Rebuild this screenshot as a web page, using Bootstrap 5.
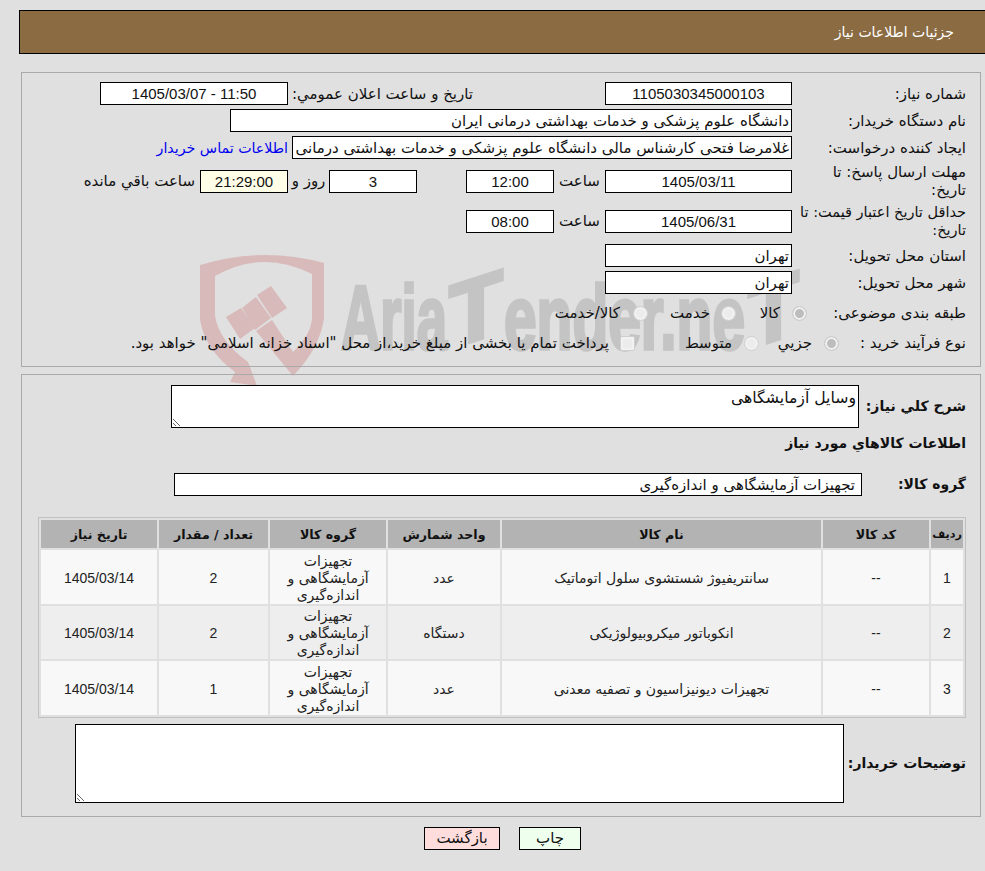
<!DOCTYPE html>
<html lang="fa" dir="rtl">
<head>
<meta charset="utf-8">
<title>جزئیات اطلاعات نیاز</title>
<link href="https://cdn.jsdelivr.net/npm/bootstrap@5.3.0/dist/css/bootstrap.min.css" rel="stylesheet">
<style>
html,body{height:871px;overflow:hidden}
body{background:#e0e0e0;font-family:"DejaVu Sans","Noto Sans",sans-serif;font-size:15px;line-height:18px;color:#111;position:relative}
.mark-wm{position:absolute;left:0;top:0;width:985px;height:871px;pointer-events:none}
.page-head{margin:10px 0 0 19px;height:44px;background:#8b6b42;border:1px solid #000;border-right:0;color:#fff;display:flex;align-items:center;padding-right:31px;font-size:14px}
.panel-box{position:relative;border:1px solid #a9a9a9;margin-left:21px;margin-right:4px}
.panel-a{margin-top:18px;height:295px;padding:9px 14px 0 0}
.panel-b{margin-top:7px;height:443px;padding:10px 14px 0 0}
.frow{display:flex;align-items:center;position:relative}
.flabel{width:174px;flex:none}
.flabel-tight{font-size:14.5px}
.fbox{display:block;height:23px;border:1px solid #000;background:#fff;border-radius:0;padding:0 2px;font:15px/21px "DejaVu Sans",sans-serif;color:#111;white-space:nowrap;overflow:hidden;flex:none;outline:0}
.centered{text-align:center;font-family:"Liberation Sans",sans-serif}
.w187{width:187px}.w88{width:88px}
.remain{background:#ffffe8}
.bluelink{color:#0000ee;text-decoration:none;font-size:14.2px}
.sp{flex:none}
.opt{display:flex;align-items:center;flex:none}
.circ{width:15px;height:15px;border-radius:50%;border:1px solid #cfcfcf;background:#ececec;box-shadow:inset 0 0 0 2px #f2f2f2;flex:none}
.circ.on{background:#bdbdbd}
.sq{width:15px;height:15px;border:1px solid #cfcfcf;border-radius:2px;background:#ececec;box-shadow:inset 0 0 0 2px #f2f2f2;flex:none}
.boldlabel{font-weight:700;font-size:14px;line-height:17px;flex:none}
.ta{display:block;border:1px solid #000;background:#fff;border-radius:0;resize:both;font:15.7px/18px "DejaVu Sans",sans-serif;padding:3px 2px;outline:0;color:#111}
.tbl-wrap{border:1px solid #c0c0c0;width:928px;position:relative}
.goods{table-layout:fixed;width:100%;border-collapse:separate;border-spacing:2px;margin:0;font-size:14px;line-height:17px}
.goods th{background:#b3b3b3;height:28px;text-align:center;vertical-align:middle;font-weight:700;font-size:12.6px;padding:1px 0 0;color:#111}
.goods th.narrow-head{font-size:11.2px}
.goods td{text-align:center;vertical-align:middle;padding:2.6px 0 0;height:53.67px;color:#222}
.goods tr.odd td{background:#f8f8f8}
.goods tr.even td{background:#eeeeee}
.latin{font-family:"Liberation Sans",sans-serif}
.actions{display:flex;justify-content:center;gap:19px;margin:10px 0 0 20px;position:relative}
.action-btn{height:23px;border:1px solid #000;border-radius:0;padding:0;font-size:15px;line-height:19px;color:#111}
.print-btn{background:#eeffee;width:62px}
.back-btn{background:#ffdddd;width:76px}
</style>
</head>
<body>
<svg class="mark-wm" viewBox="0 0 985 871" aria-hidden="true">
  <g fill="#d9baba">
    <path d="M200 265 Q262 246 324 263 L324 318 Q320 348 293 376 L256 331 L272 320 L293 352 Q311 335 312 318 L312 274 Q262 249 215 276 L215 315 Q218 340 248 362 L257 386 L230 382 L235 372 Q205 350 200 320 Z"/>
    <path d="M226 317 L241 308 L255 328 L240 339 Z"/>
    <path d="M242 308 L256 297 L271 318 L255 330 Z"/>
    <path d="M257 295 L271 286 L287 308 L272 318 Z"/>
  </g>
  <g font-family="Liberation Sans" font-weight="700" font-size="90" fill="#c4c4c4" stroke="#c4c4c4" stroke-width="3.5" direction="ltr">
    <text x="341" y="349" textLength="106" lengthAdjust="spacingAndGlyphs">Aria</text>
    <text transform="translate(449,349) skewY(-18)" x="0" y="0" textLength="54" lengthAdjust="spacingAndGlyphs">T</text>
    <text x="504" y="349" textLength="241" lengthAdjust="spacingAndGlyphs">ender.ne</text>
    <text transform="translate(748,349) skewY(-18)" x="0" y="0" textLength="51" lengthAdjust="spacingAndGlyphs">T</text>
  </g>
</svg>

<div class="page-head">جزئیات اطلاعات نیاز</div>

<div class="panel-box panel-a">
  <div class="frow">
    <div class="flabel">شماره نیاز:</div>
    <input class="fbox w187 centered" value="1105030345000103" readonly>
    <div class="sp" style="width:131px"></div>
    <div class="sp text-nowrap" style="width:186px;text-align:left;padding-left:4px">تاریخ و ساعت اعلان عمومي:</div>
    <input class="fbox centered" style="width:188px" value="11:50 - 1405/03/07" readonly>
  </div>
  <div class="frow mt-1">
    <div class="flabel">نام دستگاه خریدار:</div>
    <input class="fbox" style="width:562px" value="دانشگاه علوم پزشکی و خدمات بهداشتی درمانی ایران" readonly>
  </div>
  <div class="frow mt-1">
    <div class="flabel">ایجاد کننده درخواست:</div>
    <input class="fbox" style="width:500px" value="غلامرضا فتحی کارشناس مالی دانشگاه علوم پزشکی و خدمات بهداشتی درمانی ایران" readonly>
    <a class="bluelink me-1" href="#">اطلاعات تماس خریدار</a>
  </div>
  <div class="frow mt-1">
    <div class="flabel">مهلت ارسال پاسخ: تا<br>تاریخ:</div>
    <input class="fbox w187 centered" value="1405/03/11" readonly>
    <div class="sp" style="width:51px;text-align:center">ساعت</div>
    <input class="fbox w88 centered" value="12:00" readonly>
    <div class="sp" style="width:49px"></div>
    <input class="fbox w88 centered" value="3" readonly>
    <div class="sp" style="width:41px;text-align:center">روز و</div>
    <input class="fbox w88 centered remain" value="21:29:00" readonly>
    <div class="sp" style="margin-right:5px">ساعت باقي مانده</div>
  </div>
  <div class="frow mt-1">
    <div class="flabel flabel-tight">حداقل تاریخ اعتبار قیمت: تا<br>تاریخ:</div>
    <input class="fbox w187 centered" value="1405/06/31" readonly>
    <div class="sp" style="width:51px;text-align:center">ساعت</div>
    <input class="fbox w88 centered" value="08:00" readonly>
  </div>
  <div class="frow" style="margin-top:5px">
    <div class="flabel">استان محل تحویل:</div>
    <input class="fbox w187" value="تهران" readonly>
  </div>
  <div class="frow mt-1">
    <div class="flabel">شهر محل تحویل:</div>
    <input class="fbox w187" value="تهران" readonly>
  </div>
  <div class="frow" style="margin-top:8px;height:22px">
    <div class="sp" style="width:159px">طبقه بندی موضوعی:</div>
    <div class="opt" style="width:71px"><span class="circ on"></span><span style="margin-right:12px">کالا</span></div>
    <div class="opt" style="width:88px"><span class="circ"></span><span style="margin-right:11px">خدمت</span></div>
    <div class="opt"><span class="circ"></span><span style="margin-right:13px">کالا/خدمت</span></div>
  </div>
  <div class="frow" style="margin-top:8px;height:22px">
    <div class="sp" style="width:127px">نوع فرآیند خرید :</div>
    <div class="opt" style="width:80px"><span class="circ on"></span><span style="margin-right:12px">جزيي</span></div>
    <div class="opt" style="width:124px"><span class="circ"></span><span style="margin-right:12px">متوسط</span></div>
    <div class="opt"><span class="sq"></span><span style="margin-right:11px">پرداخت تمام یا بخشی از مبلغ خرید،از محل "اسناد خزانه اسلامی" خواهد بود.</span></div>
  </div>
</div>

<div class="panel-box panel-b">
  <div class="frow">
    <div class="boldlabel" style="width:107px">شرح كلي نياز:</div>
    <textarea class="ta" style="width:688px;height:43px" readonly>وسایل آزمایشگاهی</textarea>
  </div>
  <div class="boldlabel frow" style="margin-top:7px">اطلاعات كالاهاي مورد نياز</div>
  <div class="frow" style="margin-top:21px">
    <div class="boldlabel" style="width:104px">گروه کالا:</div>
    <input class="fbox" style="width:688px;padding-right:6px" value="تجهیزات آزمایشگاهی و اندازه‌گیری" readonly>
  </div>
  <div class="tbl-wrap" style="margin-top:21px">
    <table class="goods">
      <colgroup><col style="width:32px"><col style="width:106px"><col style="width:319px"><col style="width:112px"><col style="width:116px"><col style="width:109px"><col style="width:116px"></colgroup>
      <thead><tr><th class="narrow-head">ردیف</th><th>کد کالا</th><th>نام کالا</th><th>واحد شمارش</th><th>گروه کالا</th><th>تعداد / مقدار</th><th>تاریخ نیاز</th></tr></thead>
      <tbody>
        <tr class="odd"><td class="latin">1</td><td class="latin">--</td><td>سانتریفیوژ شستشوی سلول اتوماتیک</td><td>عدد</td><td>تجهیزات آزمایشگاهی و اندازه‌گیری</td><td class="latin">2</td><td class="latin">1405/03/14</td></tr>
        <tr class="even"><td class="latin">2</td><td class="latin">--</td><td>انکوباتور میکروبیولوژیکی</td><td>دستگاه</td><td>تجهیزات آزمایشگاهی و اندازه‌گیری</td><td class="latin">2</td><td class="latin">1405/03/14</td></tr>
        <tr class="odd"><td class="latin">3</td><td class="latin">--</td><td>تجهیزات دیونیزاسیون و تصفیه معدنی</td><td>عدد</td><td>تجهیزات آزمایشگاهی و اندازه‌گیری</td><td class="latin">1</td><td class="latin">1405/03/14</td></tr>
      </tbody>
    </table>
  </div>
  <div class="frow" style="margin-top:6px">
    <div class="boldlabel" style="width:122px">توضیحات خریدار:</div>
    <textarea class="ta" style="width:769px;height:79px" readonly></textarea>
  </div>
</div>

<div class="actions">
  <button type="button" class="action-btn print-btn">چاپ</button>
  <button type="button" class="action-btn back-btn">بازگشت</button>
</div>
</body>
</html>
